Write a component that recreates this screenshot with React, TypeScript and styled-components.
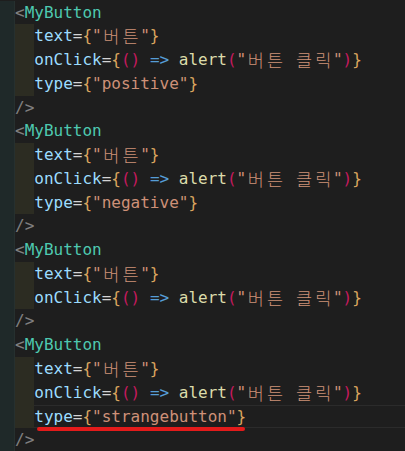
import React from "react";
import styled, { createGlobalStyle } from "styled-components";

const Global = createGlobalStyle`
  html, body { margin: 0; padding: 0; background: #1e1e1e; }
  body { width: 405px; height: 451px; overflow: hidden; }
`;

const LINE_H = 23.78;
const CH = 9.632;

const Editor = styled.div`
  position: relative;
  width: 405px;
  height: 451px;
  padding-top: 0.5px;
  box-sizing: border-box;
  background: #1e1e1e;
  font-family: "DejaVu Sans Mono", "Noto Sans CJK KR", monospace;
  font-size: 16px;
  display: flex;
  flex-direction: column;
  overflow: hidden;
`;

const Row = styled.div`
  display: flex;
  height: ${LINE_H}px;
  line-height: ${LINE_H}px;
  white-space: pre;
  flex-shrink: 0;
`;

const Gutter = styled.div`
  width: 15px;
  flex-shrink: 0;
  background: #1f2929;
  box-shadow: inset -1px 0 0 #26302f;
`;

const Content = styled.div<{ $current?: boolean }>`
  flex: 1;
  display: flex;
  align-items: stretch;
  box-shadow: ${(p) =>
    p.$current ? "inset 0 1px 0 #2b2b2b, inset 0 -1px 0 #2b2b2b" : "none"};
`;

const Indent = styled.span`
  display: inline-block;
  width: ${CH * 2}px;
  background: #2c2c22;
  flex-shrink: 0;
`;

const Text = styled.span``;

const Tok = styled.span<{ $c: string }>`
  color: ${(p) => p.$c};
`;

const Wide = styled.span`
  display: inline-block;
  width: ${CH * 2}px;
  text-align: center;
  font-family: "Noto Sans CJK KR", sans-serif;
  font-size: 17.5px;
  font-weight: 300;
  vertical-align: top;
`;

const Underline = styled.div`
  position: absolute;
  left: 37px;
  top: 427px;
  width: 208px;
  height: 4px;
  border-radius: 3px;
  background: #e31b1b;
`;

const C = {
  punct: "#808080",
  comp: "#4ec9b0",
  attr: "#9cdcfe",
  eq: "#d4d4d4",
  brace: "#dba55f",
  str: "#ce9178",
  paren: "#c51a5e",
  arrow: "#569cd6",
  fn: "#dcdcaa",
};

type T = [string, string];

const isWide = (ch: string) => /[\u1100-\u11ff\u3130-\u318f\uac00-\ud7af]/.test(ch);

function renderText(s: string) {
  const out: React.ReactNode[] = [];
  let buf = "";
  let k = 0;
  for (const ch of s) {
    if (isWide(ch)) {
      if (buf) out.push(<Text key={k++}>{buf}</Text>);
      buf = "";
      out.push(<Wide key={k++}>{ch}</Wide>);
    } else buf += ch;
  }
  if (buf) out.push(<Text key={k++}>{buf}</Text>);
  return out;
}

const open: T[] = [["<", C.punct], ["MyButton", C.comp]];
const close: T[] = [["/>", C.punct]];
const textAttr: T[] = [["text", C.attr], ["=", C.eq], ["{", C.brace], ["\"버튼\"", C.str], ["}", C.brace]];
const clickAttr: T[] = [
  ["onClick", C.attr], ["=", C.eq], ["{", C.brace], ["()", C.paren], [" ", C.eq], ["=>", C.arrow], [" ", C.eq],
  ["alert", C.fn], ["(", C.paren], ["\"버튼 클릭\"", C.str], [")", C.paren], ["}", C.brace],
];
const typeAttr = (v: string): T[] => [["type", C.attr], ["=", C.eq], ["{", C.brace], [`"${v}"`, C.str], ["}", C.brace]];

type Line = { toks: T[]; indent?: boolean; current?: boolean };

const block = (type?: string, current?: boolean): Line[] => [
  { toks: open },
  { toks: textAttr, indent: true },
  { toks: clickAttr, indent: true },
  ...(type ? [{ toks: typeAttr(type), indent: true, current }] : []),
  { toks: close },
];

const lines: Line[] = [
  ...block("positive"),
  ...block("negative"),
  ...block(),
  ...block("strangebutton", true),
];

export default function App() {
  return (
    <>
      <Global />
      <Editor>
        {lines.map((l, i) => (
          <Row key={i}>
            <Gutter />
            <Content $current={l.current}>
              {l.indent && <Indent />}
              <span>
                {l.toks.map(([t, c], j) => (
                  <Tok key={j} $c={c}>{renderText(t)}</Tok>
                ))}
              </span>
            </Content>
          </Row>
        ))}
        <Underline />
      </Editor>
    </>
  );
}
